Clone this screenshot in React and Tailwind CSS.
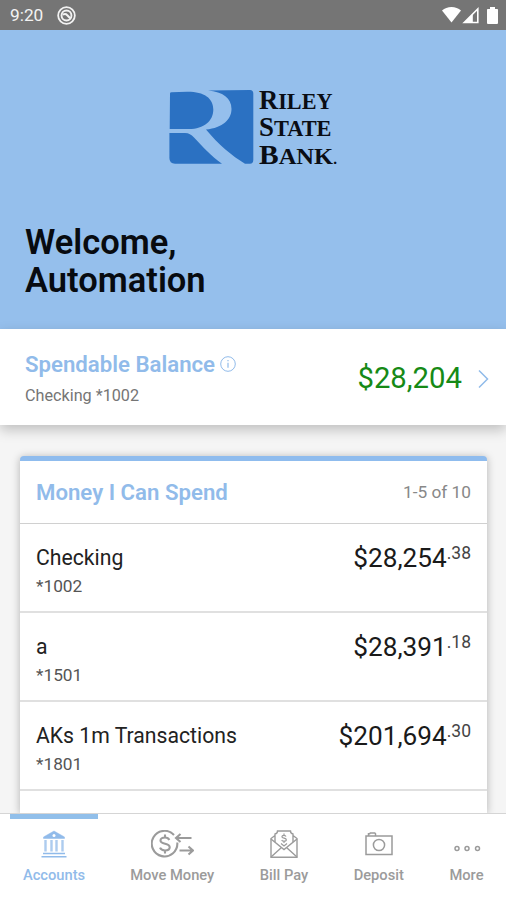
import React from "react";

const accounts = [
  { name: "Checking", number: "*1002", dollars: "$28,254", cents: ".38" },
  { name: "a", number: "*1501", dollars: "$28,391", cents: ".18" },
  { name: "AKs 1m Transactions", number: "*1801", dollars: "$201,694", cents: ".30" },
];

const StatusBar = () => (
  <div className="flex h-[30px] shrink-0 items-center bg-[#757575] pl-[10px] pr-2 text-white">
    <span className="mt-[2px] w-[35px] whitespace-nowrap text-[17.3px] text-[#f2f2f2]">9:20</span>
    <svg className="ml-3 h-[19px] w-[19px]" viewBox="0 0 18 18" fill="none" stroke="#f2f2f2">
      <circle cx="9" cy="9" r="7.9" strokeWidth="1.7" />
      <circle cx="9" cy="9" r="4.7" strokeWidth="1.8" />
      <path d="M5.5 8.2Q8 6.8 9.5 8.5L12.5 11.5" strokeWidth="2" />
    </svg>
    <div className="flex-1" />
    <svg className="h-[16px] w-[19px]" viewBox="0 0 19 16" fill="#fff">
      <path d="M0 3.6C2.6 1.2 5.8 0 9.5 0S16.4 1.2 19 3.6L9.5 15.5z" />
    </svg>
    <svg className="ml-px h-[17px] w-[17px]" viewBox="0 0 17 17" fill="none" stroke="#fff">
      <path d="M2.2 15.5L15.8 2v13.5z" strokeWidth="1.6" />
      <path d="M1.5 16L10.8 7v9z" fill="#fff" stroke="none" />
    </svg>
    <svg className="ml-2 h-[17px] w-[11px]" viewBox="0 0 11 17" fill="#fff">
      <path d="M3 0h5v2h2.2q.8 0 .8.8v13.2q0 1-1 1H1q-1 0-1-1V2.8Q0 2 .8 2H3z" />
    </svg>
  </div>
);

const Logo = () => (
  <svg
    className="h-[96px] w-[180px] overflow-visible"
    viewBox="0 -10 180 96"
    fontFamily="'Liberation Serif', serif"
    fontWeight="700"
  >
    <g fill="#2b71c2">
      <path d="M1 3.5Q1 2.3 2.5 2.2L18 1.7C35 1.5 44.3 8 44.3 19.5C44.3 31 35 39 20 39H.7z" />
      <path d="M.4 43H16C20 43 22 44.5 25 47.5C34 57 42 66 53 73.7H6Q.4 73.7.4 68z" />
      <path d="M39 .5L81 0Q84.3 0 84.3 3.5V70Q84.3 73.7 81 73.7H76C63 66 49 54 37 39.5C54 38 62.5 29 62.5 19C62.5 8 54 2 39 .5z" />
    </g>
    <g fill="#0a0d14" fontSize="22.5">
      <text x="90" y="19.3" textLength="73.5" lengthAdjust="spacingAndGlyphs">
        <tspan fontSize="27">R</tspan>ILEY
      </text>
      <text x="90" y="46.3" textLength="72.5" lengthAdjust="spacingAndGlyphs">
        <tspan fontSize="27">S</tspan>TATE
      </text>
      <text x="90" y="73.8" textLength="78" lengthAdjust="spacingAndGlyphs">
        <tspan fontSize="27">B</tspan>ANK<tspan fontSize="14">.</tspan>
      </text>
    </g>
  </svg>
);

const BankIcon = () => (
  <svg className="h-7 w-[26px]" viewBox="0 0 26 28" fill="none" stroke="currentColor">
    <path d="M13 1L2.5 7v1.5h21V7z" fill="currentColor" strokeWidth="0.5" />
    <circle cx="13" cy="5.5" r="1.5" fill="#fff" stroke="none" />
    <path d="M4.5 10v11.5M10.5 10v11.5M15.5 10v11.5M21.5 10v11.5" strokeWidth="2.4" strokeOpacity="0.75" />
    <path d="M2 23.5h22M.5 26.7h25" strokeWidth="1.5" />
  </svg>
);

const MoveMoneyIcon = () => (
  <svg className="h-7 w-[43px]" viewBox="0 0 43 28" fill="none" stroke="currentColor" strokeWidth="2.1">
    <path d="M23 5A12.8 12.8 0 1 0 26.3 12.5" />
    <path d="M18.3 10C17.6 8.300 16 7.500 14 7.500c-2.800 0-4.500 1.200-4.500 3 0 4.300 9.200 2.400 9.200 6.800 0 2-1.900 3.200-4.700 3.200-2.400 0-4.200-.9-5-2.800M14 4.500v3M14 20.500v3" />
    <path d="M40.500 8H25M29.5 4L25 8l4.5 4M28.500 20.500H42M37.500 16.500l4.500 4-4.500 4" />
  </svg>
);

const BillPayIcon = () => (
  <svg className="h-7 w-7" viewBox="0 0 28 28" fill="none" stroke="currentColor" strokeWidth="1.4">
    <path d="M5 5.500L1 8.500v18.700h26V8.500L23 5.500M5 12V4q2.500-.5 2.500-3h13q0 2.500 2.500 3v8" />
    <path d="M1 9l13 10.500L27 9M1 27l10.500-9.500M27 27l-10.500-9.500" />
    <path d="M16 6.500C15.600 5.600 14.900 5.300 14 5.300c-1.300 0-2.100.6-2.100 1.400 0 1.900 4.400 1.100 4.400 3 0 .9-1 1.500-2.300 1.500-1.100 0-1.900-.4-2.300-1.200M14 3.500v1.800M14 11.200v1.800M11 13.500l3 2.500 3-2.500" strokeWidth="1.2" />
  </svg>
);

const CameraIcon = () => (
  <svg className="h-7 w-7" viewBox="0 0 28 28" fill="none" stroke="currentColor" strokeWidth="1.5">
    <path d="M1 6h26v18.500H1zM3.500 6V3.700h1.200L5.300 3h4.500l.7.700V6" />
    <circle cx="14" cy="15" r="5.6" />
  </svg>
);

const MoreIcon = () => (
  <svg className="h-7 w-[28px]" viewBox="0 0 28 28" fill="none" stroke="currentColor" strokeWidth="1.5">
    <circle cx="4" cy="18.5" r="2" />
    <circle cx="14" cy="18.5" r="2" />
    <circle cx="24.5" cy="18.5" r="2" />
  </svg>
);

const tabs = [
  { label: "Accounts", Icon: BankIcon, width: "w-[88px]", active: true },
  { label: "Move Money", Icon: MoveMoneyIcon, width: "w-[111px]" },
  { label: "Bill Pay", Icon: BillPayIcon, width: "w-[75px]" },
  { label: "Deposit", Icon: CameraIcon, width: "w-[77px]" },
  { label: "More", Icon: MoreIcon, width: "w-[61px]" },
];

const AccountRow = ({ account }) => (
  <div className="flex h-[89px] shrink-0 justify-between border-b-2 border-[#e0e0e0] px-4 pt-5">
    <div>
      <p className="text-[21.2px] leading-7 text-[#222]">{account.name}</p>
      <p className="mt-[2px] text-[17.3px] leading-6 text-[#555]">{account.number}</p>
    </div>
    <p className="flex items-start text-[26.2px] leading-7 text-[#1a1a1a]">
      {account.dollars}
      <span className="text-[17.5px] leading-[18px] text-[#444]">{account.cents}</span>
    </p>
  </div>
);

const App = () => {
  return (
    <div className="flex h-[900px] w-[506px] flex-col overflow-hidden bg-[#f5f5f5] font-[Roboto,sans-serif]">
      <StatusBar />

      {/* Welcome banner */}
      <header className="flex h-[299px] shrink-0 flex-col bg-[#95bfec] pt-[50px]">
        <div className="pl-[169px]">
          <Logo />
        </div>
        <h1 className="mt-[47px] pl-[25px] text-[34.5px] font-semibold leading-[38px] text-[#080b10]">
          Welcome,
          <br />
          Automation
        </h1>
      </header>

      {/* Spendable balance */}
      <section className="z-10 flex h-24 shrink-0 items-center bg-white pl-[25px] pr-[17px] pt-[3px] shadow-[0_5px_12px_rgba(0,0,0,0.22)]">
        <div className="flex-1">
          <div className="-mt-px flex items-center text-[#91bbea]">
            <h2 className="text-[22.2px] font-semibold leading-8">Spendable Balance</h2>
            <svg className="ml-[5px] h-4 w-4" viewBox="0 0 16 16" fill="none" stroke="currentColor">
              <circle cx="8" cy="8" r="7.3" />
              <path d="M8 6.7v5M8 4v1.3" strokeWidth="1.2" />
            </svg>
          </div>
          <p className="mt-1 text-[16.2px] leading-6 text-[#757575]">Checking *1002</p>
        </div>
        <span className="text-[29.3px] text-[#168a16]">$28,204</span>
        <svg className="ml-4 h-5 w-[11px]" viewBox="0 0 11 20" fill="none" stroke="#91bbea" strokeWidth="1.5">
          <path d="M1 1.5L9.5 10 1 18.5" />
        </svg>
      </section>

      {/* Accounts card */}
      <main className="flex min-h-0 flex-1 flex-col overflow-hidden px-[19px] pt-[31px]">
        <div className="ml-px flex flex-1 flex-col rounded-t-[4px] border-t-[5px] border-[#8fbcee] bg-white shadow-[0_1px_9px_rgba(0,0,0,0.28)]">
          <div className="flex h-[63px] shrink-0 items-center justify-between border-b border-[#d0d0d0] px-4">
            <h2 className="mt-px text-[22.2px] font-semibold text-[#91bbea]">Money I Can Spend</h2>
            <span className="mt-px text-[17.3px] text-[#888]">1-5 of 10</span>
          </div>
          {accounts.map((account) => (
            <AccountRow key={account.number} account={account} />
          ))}
        </div>
      </main>

      {/* Bottom tabs */}
      <nav className="z-10 flex h-[87px] shrink-0 justify-between border-t border-[#d5d5d5] bg-white pl-[10px] pr-[9px]">
        {tabs.map(({ label, Icon, width, active }) => (
          <div
            key={label}
            className={`${width} flex flex-col items-center border-t-[5px] pt-[11px] ${
              active ? "border-[#91bfea] text-[#91bbea]" : "border-transparent text-[#9b9b9b]"
            }`}
          >
            <Icon />
            <span className="mt-[7px] whitespace-nowrap text-[14.7px] font-medium leading-5">{label}</span>
          </div>
        ))}
      </nav>
    </div>
  );
};

export default App;
